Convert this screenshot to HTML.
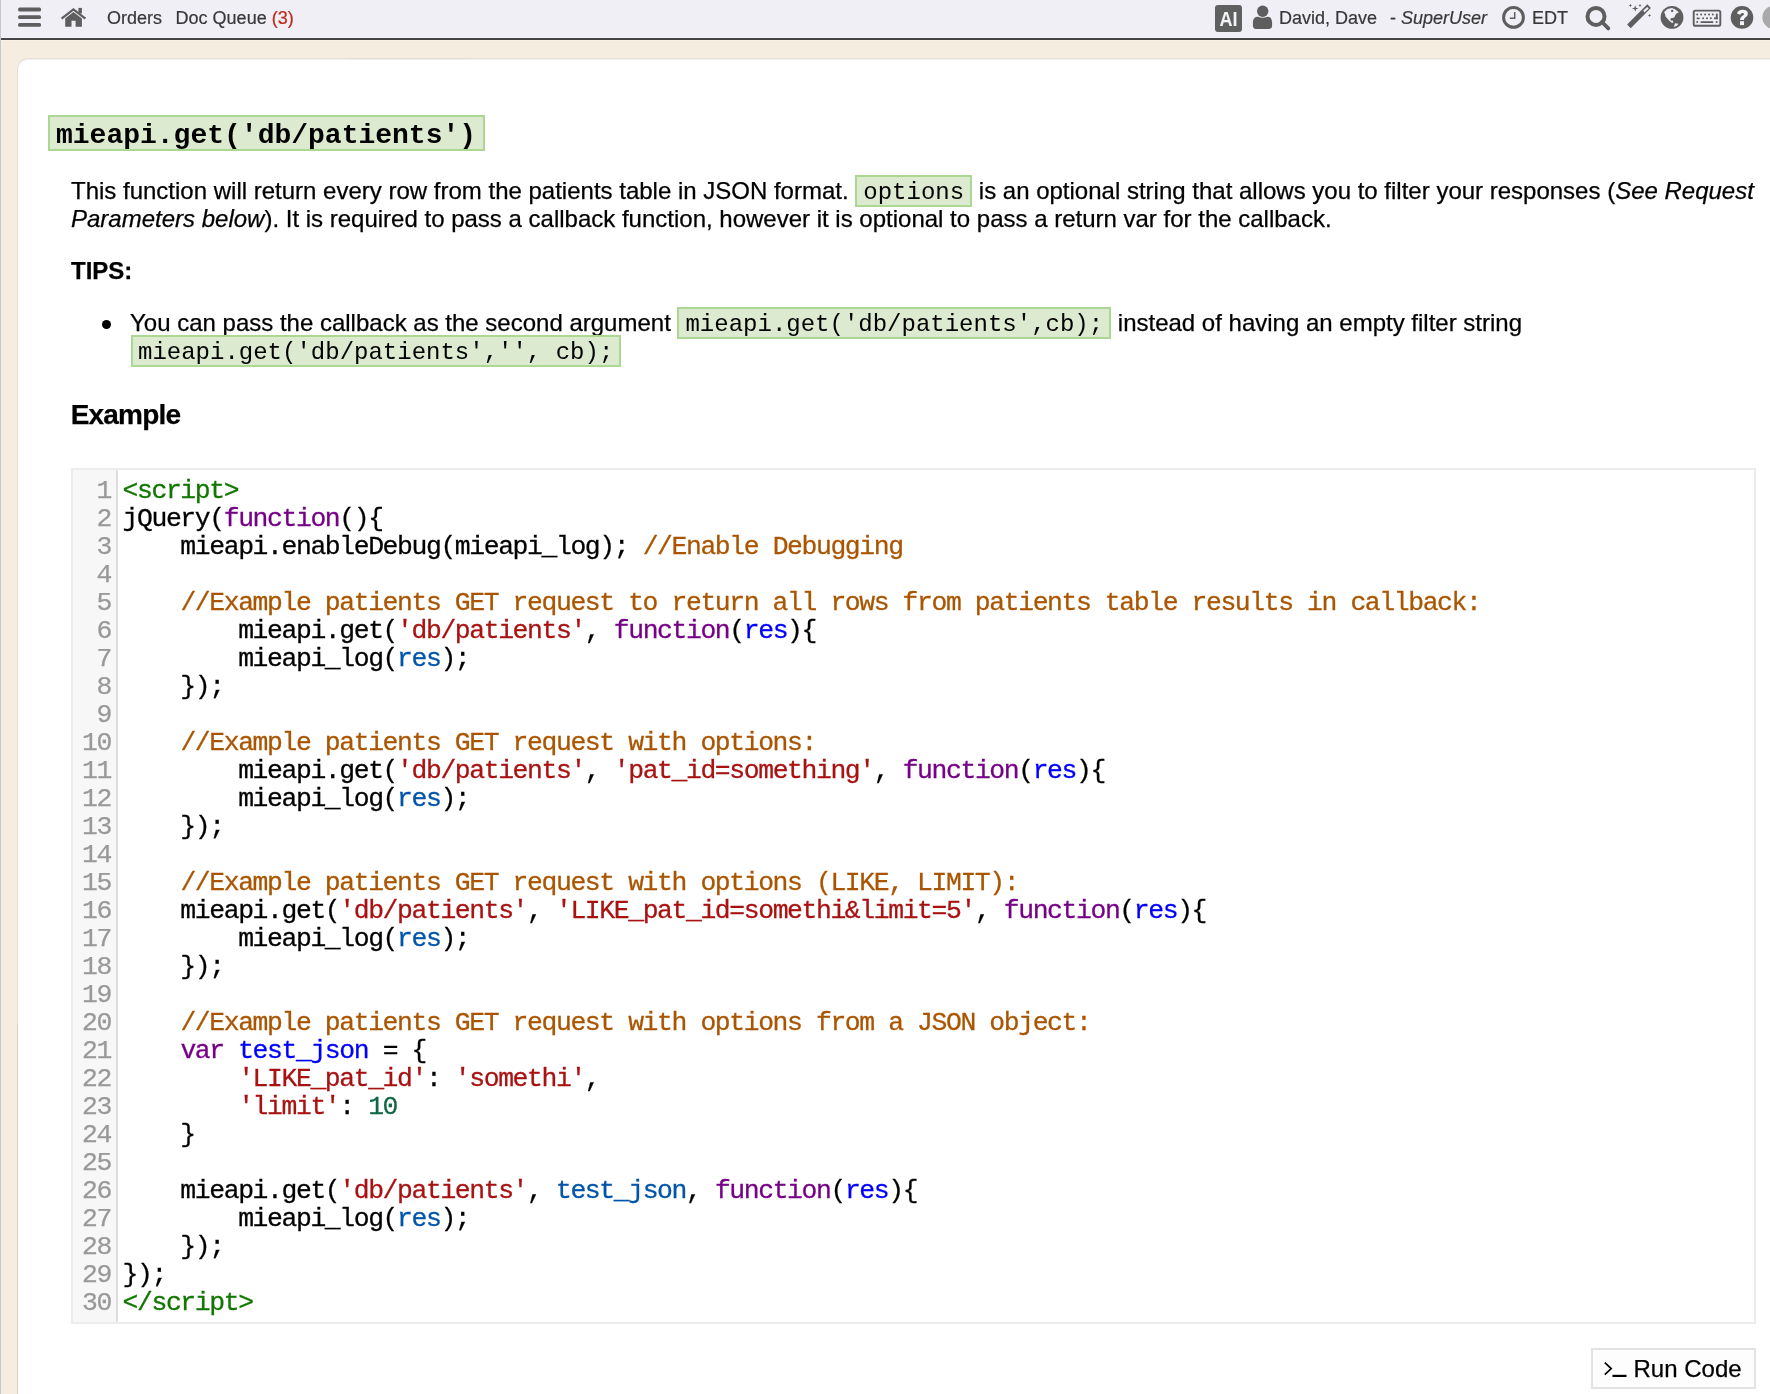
<!DOCTYPE html>
<html><head><meta charset="utf-8">
<style>
html,body{margin:0;padding:0;}
body{width:1770px;height:1394px;overflow:hidden;background:#f4ede0;position:relative;font-family:"Liberation Sans",sans-serif;color:#000;}
#lstrip{position:absolute;left:0;top:0;width:1px;height:1394px;background:#c5c9cf;z-index:5;}
#hdr{position:absolute;left:0;top:0;width:1770px;height:37px;background:#efeff5;}
#hdrline1{position:absolute;left:0;top:37px;width:1770px;height:1px;background:#f4f4f8;}
#hdrline{position:absolute;left:0;top:38px;width:1770px;height:2px;background:#454545;}
#hdrline2{position:absolute;left:0;top:40px;width:1770px;height:1px;background:#f9f2e4;}
.ht{position:absolute;top:0;font-size:18px;line-height:36px;color:#383838;-webkit-text-stroke:0.2px currentColor;white-space:nowrap;}
.ico{position:absolute;}
#panel{position:absolute;left:17px;top:58px;width:1800px;height:1400px;background:#fff;border-top-left-radius:11px;border-left:1px solid #e6e0d4;border-top:1px solid #e6dfd3;box-sizing:border-box;box-shadow:inset 0 1px 0 #f1f1f1;}
.abs{position:absolute;white-space:nowrap;}
.t24{font-size:24px;line-height:28px;-webkit-text-stroke:0.25px currentColor;}
code.ic{display:inline-block;-webkit-text-stroke:0;font-family:"Liberation Mono",monospace;font-size:24px;line-height:24px;background:#dcebd0;border:2px solid #acd793;padding:3.6px 6px 0;margin:-2px 0 -3px;}
#title{position:absolute;left:48px;top:115px;font-family:"Liberation Mono",monospace;font-weight:bold;font-size:28px;background:#dcebd0;border:2px solid #acd793;padding:0 7px 0 6px;line-height:32px;white-space:nowrap;}
#editor{position:absolute;left:71px;top:468px;width:1685px;height:856px;box-sizing:border-box;border:2px solid #ececec;background:#fff;}
#gutter{position:absolute;left:0;top:0;width:43px;height:852px;background:#f7f7f7;border-right:2px solid #ddd;}
.ln{position:absolute;right:5px;-webkit-text-stroke:0.25px #999;font-family:"Liberation Mono",monospace;font-size:26.4px;letter-spacing:-1.392px;color:#999;line-height:28px;}
#code{position:absolute;left:49.6px;top:7px;-webkit-text-stroke:0.28px currentColor;font-family:"Liberation Mono",monospace;font-size:26.4px;letter-spacing:-1.392px;line-height:28px;white-space:pre;color:#000;}
.tg{color:#170}.kw{color:#708}.cm{color:#a50}.st{color:#a11}.df{color:#00f}.v2{color:#05a}.nu{color:#164}
#run{position:absolute;left:1591px;top:1348px;width:165px;height:41px;box-sizing:border-box;border:2px solid #e3e3e3;background:#fdfdfd;}
</style></head>
<body><div id="wrap" style="position:absolute;left:0;top:0;width:1770px;height:1394px;will-change:transform;">
<div id="hdr"></div>
<div id="hdrline1"></div>
<div id="hdrline"></div>
<div id="hdrline2"></div>
<div id="lstrip"></div>

<!-- header left -->
<svg class="ico" style="left:10px;top:0px" width="40" height="35" viewBox="0 0 40 35">
 <rect x="8.1" y="7.6" width="22.9" height="3.8" rx="1.5" fill="#5e5e5e"/>
 <rect x="8.1" y="15.3" width="22.9" height="3.8" rx="1.5" fill="#5e5e5e"/>
 <rect x="8.1" y="23" width="22.9" height="3.7" rx="1.5" fill="#5e5e5e"/>
</svg>
<svg class="ico" style="left:60px;top:0px" width="30" height="35" viewBox="0 0 30 35">
 <polyline points="1.6,18.6 13.4,9.4 25.4,18.6" fill="none" stroke="#5e5e5e" stroke-width="2.3"/>
 <rect x="18.4" y="7.9" width="3.5" height="5.5" fill="#5e5e5e"/>
 <polygon points="5.2,18.6 13.4,12.1 21.9,18.6 21.9,26.7 15.6,26.7 15.6,20.8 11.5,20.8 11.5,26.7 5.2,26.7" fill="#5e5e5e"/>
</svg>
<div class="ht" style="left:107px;">Orders</div>
<div class="ht" style="left:175.6px;">Doc Queue <span style="color:#bf2a1c">(3)</span></div>

<!-- header right -->
<div class="ico" style="left:1215px;top:5px;width:27px;height:27px;background:#5f6060;border-radius:3px;"></div>
<div class="ico" style="left:1214.5px;top:5px;width:27px;height:27px;color:#f4f4f8;font-weight:bold;font-size:21px;line-height:27px;text-align:center;letter-spacing:0px;font-family:'Liberation Sans',sans-serif;transform:scaleX(0.86);transform-origin:13.3px 0;">AI</div>
<svg class="ico" style="left:1250px;top:0px" width="25" height="35" viewBox="0 0 25 35">
 <circle cx="12.7" cy="11.3" r="5.7" fill="#5e5e5e"/>
 <path d="M2.9 22.5 Q2.9 16.8 8 16.8 Q12.7 18.9 17.4 16.8 Q22.1 16.8 22.1 22.5 L22.1 25.8 Q22.1 28.9 19 28.9 L6 28.9 Q2.9 28.9 2.9 25.8 Z" fill="#5e5e5e"/>
</svg>
<div class="ht" style="left:1279px;">David, Dave</div>
<div class="ht" style="left:1390px;">- <i>SuperUser</i></div>
<svg class="ico" style="left:1500px;top:0px" width="30" height="35" viewBox="0 0 30 35">
 <circle cx="13.5" cy="17.4" r="9.9" fill="none" stroke="#5e5e5e" stroke-width="3"/>
 <path d="M14.7 11.9 L14.7 18.9 M9.8 18.2 L15.4 18.2" fill="none" stroke="#5e5e5e" stroke-width="1.5"/>
</svg>
<div class="ht" style="left:1532px;">EDT</div>
<svg class="ico" style="left:1580px;top:0px" width="35" height="35" viewBox="0 0 35 35">
 <circle cx="16" cy="16.4" r="8.5" fill="none" stroke="#5e5e5e" stroke-width="4"/>
 <path d="M22 22 L28.3 28.4" stroke="#5e5e5e" stroke-width="3.8" stroke-linecap="round"/>
</svg>
<svg class="ico" style="left:1620px;top:0px" width="35" height="35" viewBox="0 0 35 35">
 <polygon points="27.3,4.2 30.9,8.1 10.7,28.3 7.1,24.5" fill="#5e5e5e"/>
 <polygon points="23.3,10.5 27.3,6.9 28.7,8.5 24.4,12.5" fill="#efeff5"/>
 <path d="M15.2 5.2 L16 7.7 L18.5 8.5 L16 9.3 L15.2 11.8 L14.4 9.3 L11.9 8.5 L14.4 7.7 Z" fill="#5e5e5e"/>
 <path d="M10.4 3.8 L10.9 5 L12.1 5.5 L10.9 6 L10.4 7.2 L9.9 6 L8.7 5.5 L9.9 5 Z" fill="#5e5e5e"/>
 <path d="M20 4 L20.5 5 L21.5 5.5 L20.5 6 L20 7 L19.5 6 L18.5 5.5 L19.5 5 Z" fill="#5e5e5e"/>
 <path d="M29.5 13.7 L30 14.9 L31.2 15.4 L30 15.9 L29.5 17.1 L29 15.9 L27.8 15.4 L29 14.9 Z" fill="#5e5e5e"/>
</svg>
<svg class="ico" style="left:1655px;top:0px" width="35" height="35" viewBox="0 0 35 35">
 <circle cx="17" cy="17.4" r="11.4" fill="#5e5e5e"/>
 <polygon points="9.1,11.9 10.1,14.2 10.5,16.6 14,20.6 16.4,22.5 18.4,22.9 17.6,19.8 16,18.6 19.2,17.4 21.1,13.8 23.9,12.3 21.9,10.7 19.6,9.1 16.8,7.9 12.5,9.1" fill="#efeff5"/>
 <polygon points="18.8,26.9 20,23.3 23.5,23.7 21.9,25.7" fill="#efeff5"/>
 <circle cx="17.2" cy="10.9" r="1.2" fill="#5e5e5e"/>
 <circle cx="16.8" cy="19.4" r="1.3" fill="#5e5e5e"/>
</svg>
<svg class="ico" style="left:1690px;top:0px" width="35" height="35" viewBox="0 0 35 35">
 <rect x="3.7" y="10.6" width="26.6" height="15.2" rx="1.6" fill="none" stroke="#5e5e5e" stroke-width="1.9"/>
 <g fill="#5e5e5e">
 <circle cx="7.2" cy="14.5" r="1"/><circle cx="11.1" cy="14.5" r="1"/><circle cx="15.1" cy="14.5" r="1"/><circle cx="19" cy="14.5" r="1"/><circle cx="22.8" cy="14.5" r="1"/>
 <rect x="25.9" y="13.6" width="1.8" height="5.6"/><rect x="24" y="17.4" width="3.7" height="1.8"/>
 <rect x="6.5" y="17.4" width="3.3" height="1.8" rx="0.9"/><circle cx="13.1" cy="18.3" r="1"/><circle cx="17" cy="18.3" r="1"/><circle cx="20.8" cy="18.3" r="1"/>
 <circle cx="7.2" cy="22.1" r="1"/><rect x="10.4" y="21.2" width="13.1" height="1.8" rx="0.9"/><circle cx="26.7" cy="22.1" r="1"/>
 </g>
</svg>
<svg class="ico" style="left:1725px;top:0px" width="35" height="35" viewBox="0 0 35 35">
 <circle cx="17" cy="17.4" r="11.3" fill="#5e5e5e"/>
 <path d="M12 13.4 Q13.2 9.7 17.4 9.7 Q22.9 9.7 22.9 13.8 Q22.9 16 20.3 17.4 Q19 18.1 19 20.1 L15 20.1 Q15 17.1 17 15.9 Q19.1 14.8 19.1 13.9 Q19.1 12.9 17.3 12.9 Q15.9 12.9 15.2 14.8 Z" fill="#f4f4f8"/>
 <rect x="15" y="21.2" width="4" height="3.9" fill="#f4f4f8"/>
</svg>
<svg class="ico" style="left:1755px;top:0px" width="15" height="35" viewBox="0 0 15 35">
 <circle cx="18.8" cy="17.4" r="11.4" fill="#a9a9a9"/>
</svg>

<div id="panel"></div>
<div style="position:absolute;left:17px;top:1024px;width:1px;height:370px;background:#d5cec2;"></div>
<div style="position:absolute;left:347px;top:58px;width:124px;height:1px;background:#dedbd6;"></div>

<div id="title"><span style="position:relative;top:3px">mieapi.get('db/patients')</span></div>

<div class="abs t24" style="left:71px;top:177px;">This function will return every row from the patients table in JSON format. <code class="ic">options</code> is an optional string that allows you to filter your responses (<i>See Request</i></div>
<div class="abs t24" style="left:71px;top:205px;"><i>Parameters below</i>). It is required to pass a callback function, however it is optional to pass a return var for the callback.</div>

<div class="abs t24" style="left:71px;top:257px;font-weight:bold;">TIPS:</div>

<div class="abs" style="left:102px;top:320px;width:9px;height:9px;border-radius:50%;background:#000;"></div>
<div class="abs t24" style="left:130px;top:309px;">You can pass the callback as the second argument <code class="ic">mieapi.get('db/patients',cb);</code> instead of having an empty filter string</div>
<div class="abs t24" style="left:131px;top:337px;"><code class="ic" style="padding-left:5px">mieapi.get('db/patients','', cb);</code></div>

<div class="abs" style="left:70.7px;top:399px;font-size:28px;line-height:32px;font-weight:bold;letter-spacing:-0.8px;-webkit-text-stroke:0.25px #000;">Example</div>

<div id="editor">
 <div id="gutter"><div id="lns"><div class="ln" style="top:7px">1</div><div class="ln" style="top:35px">2</div><div class="ln" style="top:63px">3</div><div class="ln" style="top:91px">4</div><div class="ln" style="top:119px">5</div><div class="ln" style="top:147px">6</div><div class="ln" style="top:175px">7</div><div class="ln" style="top:203px">8</div><div class="ln" style="top:231px">9</div><div class="ln" style="top:259px">10</div><div class="ln" style="top:287px">11</div><div class="ln" style="top:315px">12</div><div class="ln" style="top:343px">13</div><div class="ln" style="top:371px">14</div><div class="ln" style="top:399px">15</div><div class="ln" style="top:427px">16</div><div class="ln" style="top:455px">17</div><div class="ln" style="top:483px">18</div><div class="ln" style="top:511px">19</div><div class="ln" style="top:539px">20</div><div class="ln" style="top:567px">21</div><div class="ln" style="top:595px">22</div><div class="ln" style="top:623px">23</div><div class="ln" style="top:651px">24</div><div class="ln" style="top:679px">25</div><div class="ln" style="top:707px">26</div><div class="ln" style="top:735px">27</div><div class="ln" style="top:763px">28</div><div class="ln" style="top:791px">29</div><div class="ln" style="top:819px">30</div></div></div>
 <div id="code"><span class="tg">&lt;script&gt;</span>
jQuery(<span class="kw">function</span>(){
    mieapi.enableDebug(mieapi_log); <span class="cm">//Enable Debugging</span>

    <span class="cm">//Example patients GET request to return all rows from patients table results in callback:</span>
        mieapi.get(<span class="st">'db/patients'</span>, <span class="kw">function</span>(<span class="df">res</span>){
        mieapi_log(<span class="v2">res</span>);
    });

    <span class="cm">//Example patients GET request with options:</span>
        mieapi.get(<span class="st">'db/patients'</span>, <span class="st">'pat_id=something'</span>, <span class="kw">function</span>(<span class="df">res</span>){
        mieapi_log(<span class="v2">res</span>);
    });

    <span class="cm">//Example patients GET request with options (LIKE, LIMIT):</span>
    mieapi.get(<span class="st">'db/patients'</span>, <span class="st">'LIKE_pat_id=somethi&amp;limit=5'</span>, <span class="kw">function</span>(<span class="df">res</span>){
        mieapi_log(<span class="v2">res</span>);
    });

    <span class="cm">//Example patients GET request with options from a JSON object:</span>
    <span class="kw">var</span> <span class="df">test_json</span> = {
        <span class="st">'LIKE_pat_id'</span>: <span class="st">'somethi'</span>,
        <span class="st">'limit'</span>: <span class="nu">10</span>
    }

    mieapi.get(<span class="st">'db/patients'</span>, <span class="v2">test_json</span>, <span class="kw">function</span>(<span class="df">res</span>){
        mieapi_log(<span class="v2">res</span>);
    });
});
<span class="tg">&lt;/script&gt;</span></div>
</div>

<div id="run"></div>
<svg class="ico" style="left:1603px;top:1361px" width="26" height="18" viewBox="0 0 26 18">
 <path d="M1.8 1.6 L8.2 7.6 L1.8 13.6" fill="none" stroke="#000" stroke-width="1.7"/>
 <rect x="9.5" y="13.8" width="14" height="2.2" fill="#000"/>
</svg>
<div class="abs" style="left:1633.5px;top:1355px;font-size:24px;line-height:28px;-webkit-text-stroke:0.25px #000;">Run Code</div>

</div></body></html>
